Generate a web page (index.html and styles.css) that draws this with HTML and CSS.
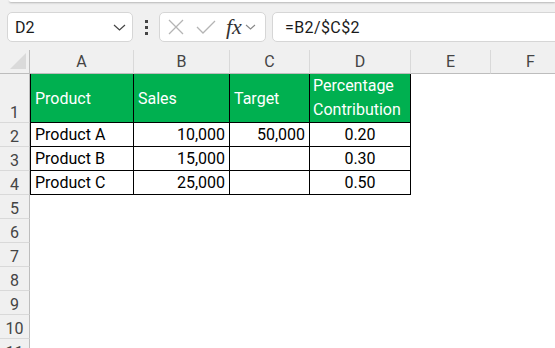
FILE: index.html
```html
<!DOCTYPE html>
<html lang="en">
<head>
    <meta charset="UTF-8">
    <title>Percentage Contribution</title>
    <link rel="stylesheet" href="styles.css">
</head>
<body>
    <div class="ribbon-edge"></div>

    <div class="formula-row">
        <div class="name-box">
            <span>D2</span>
            <svg class="chevron" width="13" height="7" viewBox="0 0 13 7"><path d="M1 1 L6.5 6 L12 1" fill="none" stroke="#444" stroke-width="1.2"/></svg>
        </div>
        <div class="kebab"><i></i><i></i><i></i></div>
        <div class="fx-box">
            <svg width="16" height="16" viewBox="0 0 16 16"><path d="M1 1 L15 15 M15 1 L1 15" stroke="#b4b4b4" stroke-width="1.3"/></svg>
            <svg width="20" height="14" viewBox="0 0 20 14"><path d="M1 7 L7 13 L19 1" fill="none" stroke="#b4b4b4" stroke-width="1.3"/></svg>
            <span class="fx">fx</span>
            <svg width="11" height="6" viewBox="0 0 11 6"><path d="M1 1 L5.5 5 L10 1" fill="none" stroke="#888" stroke-width="1.1"/></svg>
        </div>
        <div class="formula-input">=B2/$C$2</div>
    </div>

    <table class="sheet">
        <colgroup>
            <col style="width:30px">
            <col style="width:104px">
            <col style="width:96px">
            <col style="width:80px">
            <col style="width:101px">
            <col style="width:80px">
            <col style="width:80px">
        </colgroup>
        <tr class="col-heads">
            <th class="corner"><span class="triangle"></span></th>
            <th>A</th><th>B</th><th>C</th><th>D</th><th>E</th><th>F</th>
        </tr>
        <tr class="tall">
            <th class="row-num">1</th>
            <td class="head first">Product</td>
            <td class="head">Sales</td>
            <td class="head">Target</td>
            <td class="head wrap">Percentage<br>Contribution</td>
            <td></td><td></td>
        </tr>
        <tr>
            <th class="row-num">2</th>
            <td class="cell first">Product A</td>
            <td class="cell num">10,000</td>
            <td class="cell num">50,000</td>
            <td class="cell mid">0.20</td>
            <td></td><td></td>
        </tr>
        <tr>
            <th class="row-num">3</th>
            <td class="cell first">Product B</td>
            <td class="cell num">15,000</td>
            <td class="cell num"></td>
            <td class="cell mid">0.30</td>
            <td></td><td></td>
        </tr>
        <tr>
            <th class="row-num">4</th>
            <td class="cell first">Product C</td>
            <td class="cell num">25,000</td>
            <td class="cell num"></td>
            <td class="cell mid">0.50</td>
            <td></td><td></td>
        </tr>
        <tr><th class="row-num">5</th><td colspan="6"></td></tr>
        <tr><th class="row-num">6</th><td colspan="6"></td></tr>
        <tr><th class="row-num">7</th><td colspan="6"></td></tr>
        <tr><th class="row-num">8</th><td colspan="6"></td></tr>
        <tr><th class="row-num">9</th><td colspan="6"></td></tr>
        <tr><th class="row-num">10</th><td colspan="6"></td></tr>
        <tr><th class="row-num">11</th><td colspan="6"></td></tr>
    </table>
</body>
</html>
```

FILE: styles.css
```css
* {
    margin: 0;
    padding: 0;
    box-sizing: border-box;
}

body {
    font-family: Roboto, "Liberation Sans", Arial, sans-serif;
    font-size: 16px;
    color: #111;
    background-color: #f0f0f0;
    overflow: hidden;
}

.ribbon-edge {
    height: 2px;
    margin-left: 9px;
    background-color: #fff;
    border-bottom-left-radius: 6px;
    box-shadow: 0 1px 2px rgba(0,0,0,0.25);
}

.formula-row {
    display: flex;
    align-items: center;
    height: 30px;
    margin-top: 10px;
    padding-left: 7px;
}

.name-box,
.fx-box,
.formula-input {
    height: 30px;
    background-color: #fff;
    border: 1px solid #d6d6d6;
    border-radius: 5px;
    display: flex;
    align-items: center;
}

.name-box {
    width: 126px;
    padding: 0 6px 0 7px;
    justify-content: space-between;
    color: #1a1a1a;
    font-size: 16px;
}

.kebab {
    width: 26px;
    display: flex;
    flex-direction: column;
    align-items: center;
    gap: 3px;
}

.kebab i {
    width: 3px;
    height: 3px;
    background-color: #444;
}

.fx-box {
    width: 107px;
    padding: 0 6px 0 8px;
    gap: 11px;
}

.fx-box svg:nth-child(2) {
    margin-left: 1px;
}

.fx {
    font-family: "Liberation Serif", serif;
    font-style: italic;
    font-size: 22px;
    color: #333;
    margin-left: -1px;
    margin-right: -8px;
}

.formula-input {
    flex: 1;
    margin-left: 6px;
    margin-right: -10px;
    padding-left: 12px;
    font-size: 16px;
    letter-spacing: 0.4px;
    color: #1a1a1a;
}

.sheet {
    margin-top: 8px;
    table-layout: fixed;
    border-collapse: separate;
    border-spacing: 0;
    width: 571px;
    background-color: #fff;
}

.sheet th,
.sheet td {
    height: 24px;
    padding: 0 4px;
    white-space: nowrap;
    overflow: hidden;
}

.col-heads th {
    background-color: #f0f0f0;
    color: #444;
    font-weight: normal;
    border-right: 1px solid #d9d9d9;
    border-bottom: 1px solid #bdbdbd;
    text-align: center;
}

.col-heads th.corner {
    position: relative;
    border-right: 1px solid #bdbdbd;
}

.triangle {
    position: absolute;
    right: 3px;
    bottom: 4px;
    width: 0;
    height: 0;
    border-left: 16px solid transparent;
    border-bottom: 16px solid #dadada;
}

.row-num {
    background-color: #f0f0f0;
    color: #444;
    font-weight: normal;
    text-align: center;
    vertical-align: bottom;
    border-right: 1px solid #bdbdbd;
    border-bottom: 1px solid #d9d9d9;
    padding: 0 !important;
}

.tall th,
.tall td {
    height: 48px;
}

.head {
    background-color: #00b050;
    color: #fff;
    border-right: 1px solid #000;
    border-bottom: 1px solid #000;
    padding-left: 4px !important;
}

.head.wrap {
    line-height: 24px;
    padding-left: 3px !important;
}

.cell {
    border-right: 1px solid #000;
    border-bottom: 1px solid #000;
    color: #000;
}

.first {
    border-left: 1px solid #000;
}

.num {
    text-align: right;
}

.mid {
    text-align: center;
}
```
